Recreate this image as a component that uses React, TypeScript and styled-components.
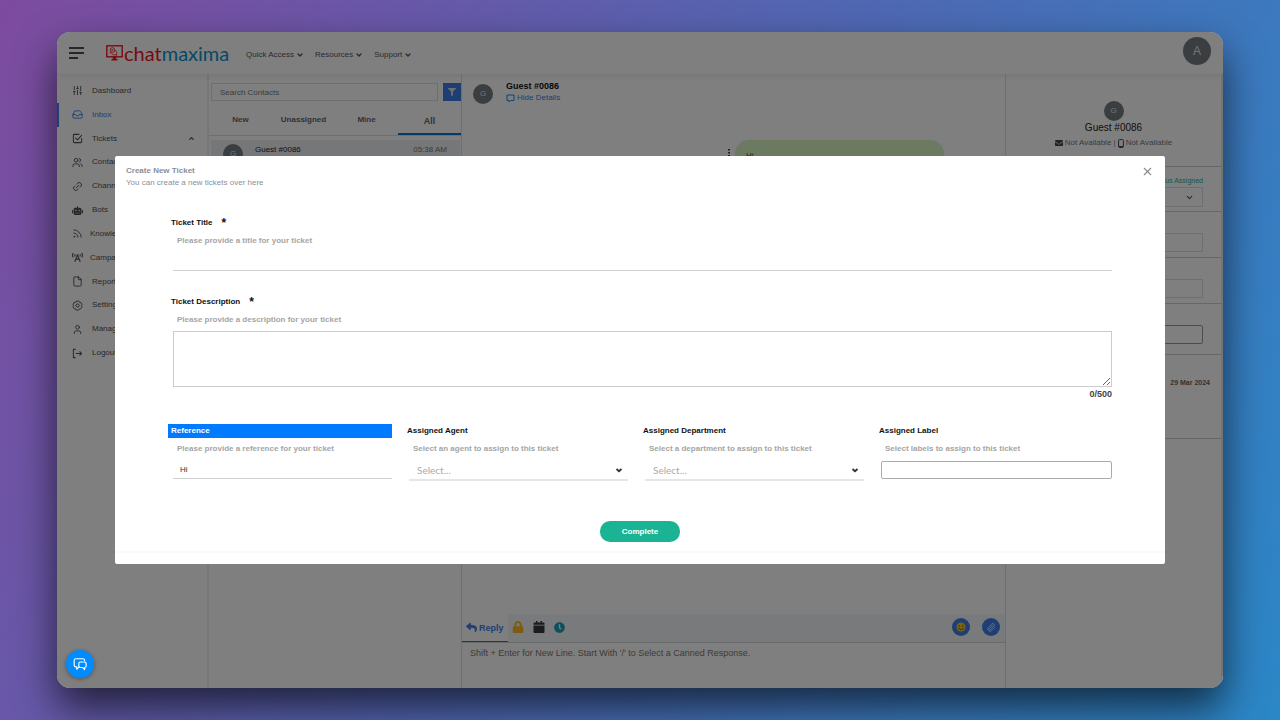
import React from "react";
import styled, { createGlobalStyle, css } from "styled-components";
import {
  SlidersVertical,
  Inbox,
  Users,
  Link2,
  Rss,
  File,
  Settings,
  User,
  ChevronDown,
  ChevronUp,
  X,
} from "lucide-react";
import {
  FaRobot,
  FaBroadcastTower,
  FaFilter,
  FaReply,
  FaLock,
  FaClock,
  FaEnvelope,
} from "react-icons/fa";
import { FiPaperclip } from "react-icons/fi";

const blue = "#3f7fe8";
const line = "#dcdfe2";

const GlobalStyle = createGlobalStyle`
  *, *::before, *::after { box-sizing: border-box; }
  body { margin: 0; }
  body, button, input, select, textarea {
    font-family: "Liberation Sans", Arial, sans-serif;
    font-size: 8px;
    line-height: 12px;
  }
  button { border: 0; padding: 0; background: none; color: inherit; cursor: pointer; }
  a { color: inherit; text-decoration: none; }
  h1, h2, p, ul { margin: 0; padding: 0; }
  ul { list-style: none; }
  svg { display: block; flex: none; }
`;

const Page = styled.div`
  min-height: 100vh;
  padding: 32px 57px;
  display: flex;
  background: linear-gradient(120deg, #7d4b9f 0%, #6659a9 27%, #4f68b3 52%, #3c79be 76%, #2b87c7 100%);
`;

const Window = styled.div`
  position: relative;
  flex: 1;
  min-width: 0;
  display: flex;
  flex-direction: column;
  border-radius: 13px;
  background: #fff;
  overflow: hidden;
`;

const Shadow = styled.div`
  flex: 1;
  min-width: 0;
  display: flex;
  border-radius: 13px;
  box-shadow: 0 20px 40px rgba(0, 0, 0, 0.65);
`;

const Header = styled.header`
  position: relative;
  height: 42px;
  flex: none;
  display: flex;
  align-items: center;
  padding: 0 12px;
  color: #555;
  box-shadow: 0 1px 8px rgba(0, 0, 0, 0.1);
`;

const MenuButton = styled.button`
  width: 15px;
  display: grid;
  gap: 3px;
`;

const MenuBar = styled.span<{ $short?: boolean }>`
  height: 2px;
  width: ${(p) => (p.$short ? "9px" : "15px")};
  background: #4a4f55;
`;

const Brand = styled.a`
  display: flex;
  align-items: center;
  gap: 1px;
  margin: 0 15px 0 22px;
`;

const BrandName = styled.span`
  width: 107px;
  font: 400 20px/24px Lato, "Liberation Sans", sans-serif;
  color: #f2141c;
`;

const BrandTail = styled.span`
  color: #0d93cf;
`;

const TopNav = styled.nav`
  flex: 1;
  display: flex;
  gap: 11px;
  padding-top: 3px;
`;

const TopItem = styled.button`
  display: flex;
  align-items: center;
  gap: 2px;
`;

const Avatar = styled.span<{ $size: number }>`
  flex: none;
  display: grid;
  place-items: center;
  width: ${(p) => p.$size}px;
  height: ${(p) => p.$size}px;
  border-radius: 50%;
  background: #777c80;
  color: #e4e4e4;
  font-size: ${(p) => (p.$size > 20 ? 12 : 8)}px;
`;

const AvatarButton = styled.button`
  margin-bottom: 4px;
`;

const Body = styled.div`
  flex: 1;
  display: grid;
  grid-template-columns: 152px 253px minmax(0, 1fr) 218px;
`;

const Sidebar = styled.nav`
  border-right: 2px solid #eceeef;
  padding-top: 5px;
`;

const NavList = styled.ul`
  display: grid;
  grid-auto-rows: 1fr;
  height: 286px;
`;

const NavLink = styled.a<{ $active?: boolean; $wide?: boolean }>`
  height: 100%;
  display: flex;
  align-items: center;
  gap: ${(p) => (p.$wide ? 7 : 9)}px;
  padding: 0 12px 0 ${(p) => (p.$active ? 13 : 15)}px;
  color: ${(p) => (p.$active ? blue : "#505050")};
  ${(p) => p.$active && css`border-left: 2px solid ${blue};`}
`;

const NavText = styled.span`
  flex: 1;
`;

const Contacts = styled.section`
  border-right: 1px solid #dcdfe2;
`;

const SearchRow = styled.div`
  display: flex;
  gap: 5px;
  padding: 9px 0 9px 2px;
`;

const SearchInput = styled.input`
  flex: 1;
  min-width: 0;
  height: 18px;
  border: 1px solid ${line};
  padding: 0 8px;
  background: transparent;
  color: #555;
  &::placeholder { color: #777; opacity: 1; }
`;

const FilterButton = styled.button`
  width: 18px;
  height: 18px;
  display: grid;
  place-items: center;
  background: ${blue};
  color: #ddd;
`;

const Tabs = styled.div`
  display: grid;
  grid-template-columns: repeat(4, 1fr);
  border-bottom: 1px solid ${line};
`;

const Tab = styled.button<{ $active?: boolean }>`
  height: 25px;
  padding-bottom: 6px;
  font-weight: 700;
  color: #666;
  ${(p) =>
    p.$active &&
    css`
      padding-bottom: 2px;
      font-size: 9px;
      border-bottom: 2px solid #0b74d1;
    `}
`;

const ContactRow = styled.div`
  display: flex;
  gap: 12px;
  margin: 4px 1px 0 2px;
  padding: 4px 13px 10px 12px;
  height: 38px;
  background: #eceff3;
`;

const ContactName = styled.span`
  flex: 1;
  color: #222;
`;

const ContactTime = styled.time`
  color: #777;
`;

const Chat = styled.section`
  min-width: 0;
  display: flex;
  flex-direction: column;
`;

const ChatHeader = styled.div`
  display: flex;
  align-items: flex-end;
  gap: 13px;
  padding: 6px 11px;
`;

const ChatName = styled.h2`
  font-size: 9px;
  line-height: 12px;
  color: #111;
`;

const DetailsToggle = styled.button`
  display: flex;
  align-items: center;
  gap: 2px;
  color: ${blue};
`;

const Messages = styled.div`
  flex: 1;
  display: flex;
  align-items: flex-start;
  justify-content: flex-end;
  padding: 30px 61px 0 0;
`;

const Kebab = styled.button`
  width: 12px;
  padding-top: 9px;
  display: grid;
  justify-content: center;
  color: #444;
`;

const Bubble = styled.div`
  width: 209px;
  height: 38px;
  padding: 10px 11px;
  border-radius: 14px;
  background: #dbf4c5;
  color: #444;
`;

const ComposerBar = styled.div`
  height: 29px;
  display: flex;
  align-items: center;
  padding-right: 5px;
  background: #f1f4f8;
  border-bottom: 1px solid #cfd3d7;
`;

const ReplyTab = styled.button`
  align-self: stretch;
  display: flex;
  align-items: center;
  gap: 2px;
  padding: 0 4px;
  background: #fff;
  border-bottom: 1px solid #0b84e0;
  color: ${blue};
  font-size: 9px;
  font-weight: 700;
`;

const ComposerTools = styled.div`
  flex: 1;
  display: flex;
  gap: 9px;
  padding: 0 0 2px 4px;
`;

const RoundTools = styled.div`
  display: flex;
  gap: 12px;
  padding-bottom: 2px;
`;

const ToolButton = styled.button<{ $color: string }>`
  color: ${(p) => p.$color};
`;

const RoundButton = styled.button`
  width: 18px;
  height: 18px;
  display: grid;
  place-items: center;
  border-radius: 50%;
  background: ${blue};
  color: #eee;
`;

const Composer = styled.textarea`
  height: 45px;
  border: 0;
  padding: 4px 8px;
  resize: none;
  background: transparent;
  font-size: 9px;
  &::placeholder { color: #777; opacity: 1; }
`;

const Details = styled.aside`
  border-left: 1px solid ${line};
  border-right: 2px solid #e8e8e8;
`;

const Profile = styled.div`
  height: 92px;
  padding-top: 27px;
  display: flex;
  flex-direction: column;
  align-items: center;
`;

const ProfileName = styled.h2`
  font-size: 10px;
  line-height: 14px;
  font-weight: 400;
  color: #222;
`;

const ProfileMeta = styled.p`
  display: flex;
  align-items: center;
  gap: 2px;
  margin-top: 2px;
  color: #777;
`;

const MetaIcon = styled.span`
  color: #444;
`;

const DetailBlock = styled.div<{ $height: number }>`
  height: ${(p) => p.$height}px;
  border-top: 1px solid #cbcfd2;
  padding: 8px 18px 0;
  font-size: 7px;
  display: flex;
  flex-direction: column;
`;

const StatusText = styled.span`
  align-self: flex-end;
  color: #1ab394;
`;

const DetailSelect = styled.button`
  height: 20px;
  display: flex;
  align-items: center;
  justify-content: flex-end;
  padding-right: 8px;
  border: 1px solid ${line};
  color: #555;
`;

const DetailInput = styled.input<{ $strong?: boolean }>`
  width: 100%;
  height: 19px;
  margin-top: 13px;
  border: 1px solid ${(p) => (p.$strong ? "#999" : line)};
  border-radius: ${(p) => (p.$strong ? 2 : 0)}px;
  background: transparent;
`;

const DetailDate = styled.time`
  margin: 14px -7px 0 0;
  align-self: flex-end;
  font-weight: 700;
  color: #666;
`;

const Backdrop = styled.div`
  position: absolute;
  inset: 0;
  display: flex;
  align-items: center;
  padding: 0 58px;
  background: rgba(0, 0, 0, 0.5);
`;

const Modal = styled.div`
  flex: 1;
  min-width: 0;
  border-radius: 2px;
  background: #fff;
`;

const ModalHeader = styled.div`
  display: flex;
  justify-content: space-between;
  align-items: flex-start;
  padding: 9px 11px 0;
  color: #8b8f98;
`;

const ModalTitle = styled.h1`
  font-size: 8px;
  line-height: 12px;
`;

const CloseButton = styled.button`
  color: #888;
`;

const Form = styled.form`
  padding: 27px 53px 9px;
  display: flex;
  flex-direction: column;
`;

const Field = styled.div`
  min-width: 0;
  display: flex;
  flex-direction: column;
`;

const Label = styled.label<{ $selected?: boolean }>`
  height: 14px;
  display: flex;
  align-items: center;
  gap: 9px;
  padding-left: 3px;
  font-weight: 700;
  color: ${(p) => (p.$selected ? "#fff" : "#111")};
  background: ${(p) => (p.$selected ? "#007bff" : "transparent")};
`;

const Required = styled.span`
  font-size: 12px;
`;

const Hint = styled.p`
  margin-top: 5px;
  padding-left: 9px;
  font-weight: 700;
  color: #a5a5a5;
  white-space: nowrap;
`;

const LineInput = styled.input`
  height: 24px;
  margin-left: 5px;
  min-width: 0;
  padding: 6px 7px 0;
  border: 0;
  border-bottom: 1px solid #d0d0d0;
  color: #333;
  background: transparent;
`;

const Description = styled.textarea`
  height: 56px;
  margin: 5px 0 0 5px;
  border: 1px solid #ccc;
  resize: vertical;
`;

const Counter = styled.output`
  align-self: flex-end;
  margin-top: 1px;
  font-size: 9px;
  font-weight: 700;
  color: #444;
`;

const TitleField = styled(Field)`
  margin-bottom: 24px;
`;

const Columns = styled.div`
  margin-top: 24px;
  display: grid;
  grid-template-columns: repeat(3, minmax(0, 224fr)) minmax(0, 236fr);
  gap: 12px;
`;

const SelectBox = styled.div`
  position: relative;
  margin-left: 5px;
`;

const Select = styled.select`
  width: 100%;
  height: 26px;
  padding: 5px 8px 0;
  appearance: none;
  border: 0;
  border-bottom: 2px solid #e6e6e6;
  background: transparent;
  color: #aaa;
  font: 400 10px/14px Lato, sans-serif;
`;

const SelectArrow = styled.span`
  position: absolute;
  right: 5px;
  top: 11px;
  color: #333;
  pointer-events: none;
`;

const TagInput = styled.input`
  height: 18px;
  margin: 6px 0 0 5px;
  min-width: 0;
  border: 1px solid #aaa;
  border-radius: 2px;
`;

const Submit = styled.button`
  align-self: center;
  width: 80px;
  height: 21px;
  margin-top: 40px;
  border-radius: 10px;
  background: #1ab394;
  color: #fff;
  font-weight: 700;
`;

const ModalFooter = styled.div`
  height: 13px;
  border-top: 2px solid #fafafa;
`;

const ChatLauncher = styled.button`
  position: absolute;
  left: 9px;
  bottom: 10px;
  width: 28px;
  height: 28px;
  display: grid;
  place-items: center;
  border-radius: 50%;
  background: #008cff;
  color: #fff;
  box-shadow: 0 1px 4px rgba(0, 0, 0, 0.35);
`;

const BrandIcon = () => (
  <svg width="17" height="16" viewBox="0 0 17 16" fill="none" stroke="#f2141c">
    <rect x="0.8" y="0.8" width="15.4" height="11" strokeWidth="1.4" />
    <path d="M8.500 12v2" strokeWidth="3.4" />
    <path d="M5.500 14.800h6" strokeWidth="1.5" />
    <circle cx="6.400" cy="5" r="2.300" strokeWidth="0.8" />
    <path d="M5.400 4.500h2M5.400 5.700h2M4.600 6.800l-.6 1.600 1.500-.9" strokeWidth="0.6" />
    <path d="M9 5.400a2.200 2.200 0 0 1 1.300 3.500l.6 1.400-1.700-.5a2.600 2.600 0 0 1-3.400-1.500" strokeWidth="0.8" />
  </svg>
);

const TicketIcon = () => (
  <svg width="11" height="11" viewBox="0 0 24 24" fill="none" stroke="currentColor" strokeWidth="2.200" strokeLinecap="round">
    <path d="M15 3H5a2 2 0 0 0-2 2v14a2 2 0 0 0 2 2h14a2 2 0 0 0 2-2v-7" />
    <path d="m8 11 4 4L21 5" />
  </svg>
);

const ExitIcon = () => (
  <svg width="11" height="11" viewBox="0 0 24 24" fill="none" stroke="currentColor" strokeWidth="2.200" strokeLinecap="round" strokeLinejoin="round">
    <path d="M7 3H3v18h4" />
    <path d="M9 12h12m-4-4 4 4-4 4" />
  </svg>
);

const GearIcon = () => (
  <svg width="11" height="11" viewBox="0 0 24 24" fill="none" stroke="currentColor" strokeWidth="2" strokeLinejoin="round">
    <path d="M9 2.500h6l1.500 2.700 3 .2 2.500 5-1.500 1.600 1.500 2.600-3 4.700-3 .2L14.500 22h-5L8 19.500l-3-.2-3-4.700L3.500 12 2 10.400l2.500-5 3-.2z" />
    <circle cx="12" cy="12" r="3.500" />
  </svg>
);

const CalendarIcon = () => (
  <svg width="12" height="12" viewBox="0 0 12 12" fill="currentColor">
    <path d="M3 0h1.500v1.500h3V0H9v1.500h1.500a1 1 0 0 1 1 1v1.200H.5V2.500a1 1 0 0 1 1-1H3zM.5 4.500h11V11a1 1 0 0 1-1 1h-9a1 1 0 0 1-1-1z" />
  </svg>
);

const ScreenBubbleIcon = () => (
  <svg width="9" height="9" viewBox="0 0 9 9" fill="none" stroke="#0b8cf0" strokeWidth="1">
    <path d="M1 1h7v5.500H4.500L3 8V6.500H1z" />
  </svg>
);

const DotsIcon = () => (
  <svg width="2" height="8" viewBox="0 0 2 8" fill="currentColor">
    <path d="M0 0h2v1.500H0zM0 3h2v1.500H0zM0 6h2v1.500H0z" />
  </svg>
);

const ArrowIcon = () => (
  <svg width="8" height="8" viewBox="0 0 8 8" fill="none" stroke="currentColor" strokeWidth="1.800">
    <path d="M1.500 3 4 5.200 6.500 3" />
  </svg>
);

const PhoneIcon = () => (
  <svg width="6" height="9" viewBox="0 0 6 9" fill="none" stroke="currentColor">
    <rect x="0.6" y="0.6" width="4.800" height="7.800" rx="0.8" strokeWidth="1" />
    <path d="M1 7.600h4" strokeWidth="1.400" />
  </svg>
);

const SmileIcon = () => (
  <svg width="10" height="10" viewBox="0 0 10 10">
    <circle cx="5" cy="5" r="4.500" fill="#f8c528" />
    <circle cx="3.400" cy="3.900" r="0.700" fill="#6b4a10" />
    <circle cx="6.600" cy="3.900" r="0.700" fill="#6b4a10" />
    <path d="M2.300 5.700a2.900 2.900 0 0 0 5.400 0" fill="none" stroke="#6b4a10" strokeWidth="0.8" />
  </svg>
);

const LauncherIcon = () => (
  <svg width="14" height="14" viewBox="0 0 24 24" fill="none" stroke="currentColor" strokeWidth="2" strokeLinejoin="round" strokeLinecap="round">
    <path d="M6.500 20.500V17H5a3 3 0 0 1-3-3V6a3 3 0 0 1 3-3h12a3 3 0 0 1 3 3" />
    <path d="M12.500 8.500H20a2.500 2.500 0 0 1 2.500 2.500v4.500A2.500 2.500 0 0 1 20 18v3.500L16.500 18h-4a2.500 2.500 0 0 1-2.500-2.500V11a2.500 2.500 0 0 1 2.500-2.500Z" />
    <path d="m6.500 20.500 4-3.500" />
  </svg>
);

const navItems = [
  { text: "Dashboard", icon: <SlidersVertical size={11} /> },
  { text: "Inbox", icon: <Inbox size={11} />, active: true },
  { text: "Tickets", icon: <TicketIcon />, open: true },
  { text: "Contacts", icon: <Users size={11} /> },
  { text: "Channels", icon: <Link2 size={11} style={{ transform: "rotate(-45deg)" }} /> },
  { text: "Bots", icon: <FaRobot size={11} /> },
  { text: "Knowledge Source", icon: <Rss size={11} />, wide: true },
  { text: "Campaigns", icon: <FaBroadcastTower size={11} />, wide: true },
  { text: "Reports", icon: <File size={11} /> },
  { text: "Settings", icon: <GearIcon /> },
  { text: "Manage", icon: <User size={11} /> },
  { text: "Logout", icon: <ExitIcon /> },
];

const SelectField = ({ id, label, hint }: { id: string; label: string; hint: string }) => (
  <Field>
    <Label htmlFor={id}>{label}</Label>
    <Hint>{hint}</Hint>
    <SelectBox>
      <Select id={id} defaultValue="">
        <option value="">Select...</option>
      </Select>
      <SelectArrow>
        <ArrowIcon />
      </SelectArrow>
    </SelectBox>
  </Field>
);

export default function App() {
  return (
    <Page>
      <GlobalStyle />
      <Shadow>
        <Window>
          <Header>
            <MenuButton type="button" aria-label="Menu">
              <MenuBar />
              <MenuBar />
              <MenuBar $short />
            </MenuButton>
            <Brand href="#">
              <BrandIcon />
              <BrandName>
                chat<BrandTail>maxima</BrandTail>
              </BrandName>
            </Brand>
            <TopNav>
              {["Quick Access", "Resources", "Support"].map((item) => (
                <TopItem type="button" key={item}>
                  {item}
                  <ChevronDown size={8} strokeWidth={4} />
                </TopItem>
              ))}
            </TopNav>
            <AvatarButton type="button">
              <Avatar $size={28}>A</Avatar>
            </AvatarButton>
          </Header>

          <Body>
            <Sidebar>
              <NavList>
                {navItems.map((item) => (
                  <li key={item.text}>
                    <NavLink href="#" $active={item.active} $wide={item.wide}>
                      {item.icon}
                      <NavText>{item.text}</NavText>
                      {item.open && <ChevronUp size={7} strokeWidth={4} />}
                    </NavLink>
                  </li>
                ))}
              </NavList>
            </Sidebar>

            <Contacts>
              <SearchRow>
                <SearchInput placeholder="Search Contacts" aria-label="Search Contacts" />
                <FilterButton type="button" aria-label="Filter">
                  <FaFilter size={8} />
                </FilterButton>
              </SearchRow>
              <Tabs>
                <Tab type="button">New</Tab>
                <Tab type="button">Unassigned</Tab>
                <Tab type="button">Mine</Tab>
                <Tab type="button" $active>All</Tab>
              </Tabs>
              <ContactRow>
                <Avatar $size={20}>G</Avatar>
                <ContactName>Guest #0086</ContactName>
                <ContactTime>05:38 AM</ContactTime>
              </ContactRow>
            </Contacts>

            <Chat>
              <ChatHeader>
                <Avatar $size={20}>G</Avatar>
                <div>
                  <ChatName>Guest #0086</ChatName>
                  <DetailsToggle type="button">
                    <ScreenBubbleIcon />
                    Hide Details
                  </DetailsToggle>
                </div>
              </ChatHeader>
              <Messages>
                <Kebab type="button" aria-label="Message options">
                  <DotsIcon />
                </Kebab>
                <Bubble>Hi</Bubble>
              </Messages>
              <ComposerBar>
                <ReplyTab type="button">
                  <FaReply size={11} />
                  Reply
                </ReplyTab>
                <ComposerTools>
                  <ToolButton type="button" aria-label="Private note" $color="#ffb422">
                    <FaLock size={12} />
                  </ToolButton>
                  <ToolButton type="button" aria-label="Calendar" $color="#343a40">
                    <CalendarIcon />
                  </ToolButton>
                  <ToolButton type="button" aria-label="Schedule" $color="#17a2b8">
                    <FaClock size={11} />
                  </ToolButton>
                </ComposerTools>
                <RoundTools>
                  <RoundButton type="button" aria-label="Emoji">
                    <SmileIcon />
                  </RoundButton>
                  <RoundButton type="button" aria-label="Attach">
                    <FiPaperclip size={9} />
                  </RoundButton>
                </RoundTools>
              </ComposerBar>
              <Composer
                aria-label="Reply message"
                placeholder="Shift + Enter for New Line. Start With '/' to Select a Canned Response."
              />
            </Chat>

            <Details>
              <Profile>
                <Avatar $size={20}>G</Avatar>
                <ProfileName>Guest #0086</ProfileName>
                <ProfileMeta>
                  <MetaIcon><FaEnvelope size={8} /></MetaIcon>
                  Not Available |
                  <MetaIcon><PhoneIcon /></MetaIcon>
                  Not Available
                </ProfileMeta>
              </Profile>
              <DetailBlock $height={45}>
                <StatusText>Status Assigned</StatusText>
                <DetailSelect type="button" aria-label="Status">
                  <ChevronDown size={9} strokeWidth={3} />
                </DetailSelect>
              </DetailBlock>
              <DetailBlock $height={46}>
                <DetailInput aria-label="Agent" />
              </DetailBlock>
              <DetailBlock $height={46}>
                <DetailInput aria-label="Department" />
              </DetailBlock>
              <DetailBlock $height={51}>
                <DetailInput aria-label="Labels" $strong />
              </DetailBlock>
              <DetailBlock $height={84}>
                <DetailDate>29 Mar 2024</DetailDate>
              </DetailBlock>
              <DetailBlock $height={20} />
            </Details>
          </Body>

          <Backdrop>
            <Modal role="dialog" aria-labelledby="dialog-title">
              <ModalHeader>
                <div>
                  <ModalTitle id="dialog-title">Create New Ticket</ModalTitle>
                  <p>You can create a new tickets over here</p>
                </div>
                <CloseButton type="button" aria-label="Close">
                  <X size={13} strokeWidth={2} />
                </CloseButton>
              </ModalHeader>
              <Form>
                <TitleField>
                  <Label htmlFor="title">
                    Ticket Title <Required>*</Required>
                  </Label>
                  <Hint>Please provide a title for your ticket</Hint>
                  <LineInput id="title" />
                </TitleField>
                <Field>
                  <Label htmlFor="description">
                    Ticket Description <Required>*</Required>
                  </Label>
                  <Hint>Please provide a description for your ticket</Hint>
                  <Description id="description" maxLength={500} />
                  <Counter htmlFor="description">0/500</Counter>
                </Field>
                <Columns>
                  <Field>
                    <Label htmlFor="reference" $selected>Reference</Label>
                    <Hint>Please provide a reference for your ticket</Hint>
                    <LineInput id="reference" defaultValue="Hi" />
                  </Field>
                  <SelectField id="agent" label="Assigned Agent" hint="Select an agent to assign to this ticket" />
                  <SelectField id="department" label="Assigned Department" hint="Select a department to assign to this ticket" />
                  <Field>
                    <Label htmlFor="labels">Assigned Label</Label>
                    <Hint>Select labels to assign to this ticket</Hint>
                    <TagInput id="labels" />
                  </Field>
                </Columns>
                <Submit type="button">Complete</Submit>
              </Form>
              <ModalFooter />
            </Modal>
            <ChatLauncher type="button" aria-label="Open chat">
              <LauncherIcon />
            </ChatLauncher>
          </Backdrop>
        </Window>
      </Shadow>
    </Page>
  );
}
